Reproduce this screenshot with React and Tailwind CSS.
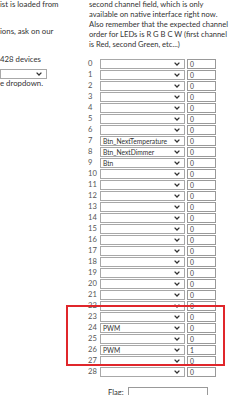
import React from 'react';

const rows = [
  '', '', '', '', '', '', '', 'Btn_NextTemperature', 'Btn_NextDimmer', 'Btn',
  '', '', '', '', '', '', '', '', '', '', '', '', '', '', 'PWM', '', 'PWM', '', '',
];
const values = rows.map((_, i) => (i === 26 ? '1' : '0'));

const Chevron = () => (
  <svg width="6" height="4" viewBox="0 0 6 4" className="shrink-0">
    <polyline points="0.6,0.6 3,3 5.4,0.6" fill="none" stroke="#333" strokeWidth="1.3" />
  </svg>
);

const FakeSelect = ({ value, width }) => (
  <div className={`${width} h-[10px] border border-[#a8a8a8] bg-white flex items-center justify-between pl-[2px] pr-[4px]`}>
    <span className="text-[6.7px] leading-none text-[#333] whitespace-nowrap">{value}</span>
    <Chevron />
  </div>
);

export default function App() {
  return (
    <div
      className="relative w-[250px] h-[395px] overflow-hidden bg-white flex text-[#333]"
      style={{ fontFamily: 'Lato, "Noto Sans", sans-serif' }}
    >
      {/* left column, cut off at the window edge */}
      <div className="w-[88px] shrink-0 overflow-hidden text-[7.8px] leading-[10px] whitespace-nowrap">
        <p className="-mt-[1px]">ist is loaded from</p>
        <p className="mt-[17px]">ions, ask on our</p>
        <p className="mt-[18px]">428 devices</p>
        <div className="mt-[5px] flex">
          <FakeSelect value="" width="w-[47px]" />
        </div>
        <p className="mt-[-1px]">e dropdown.</p>
      </div>

      {/* right column */}
      <div className="flex-1 flex flex-col">
        <div className="pl-[1px] -mt-[1px] text-[7.6px] leading-[10px] whitespace-nowrap">
          <p>second channel field, which is only</p>
          <p>available on native interface right now.</p>
          <p>Also remember that the expected channel</p>
          <p>order for LEDs is R G B C W (first channel</p>
          <p>is Red, second Green, etc...)</p>
        </div>

        <div className="mt-[10px] flex flex-col gap-[1px]">
          {rows.map((r, i) => (
            <div key={i} className="flex items-center h-[10px]">
              <span className="w-[12px] text-[7.6px] leading-none text-[#555]">{i}</span>
              <FakeSelect value={r} width="w-[85px]" />
              <div className="ml-[2px] w-[29px] h-[10px] border border-[#999] bg-white flex items-center pl-[2px]">
                <span className="text-[6.8px] leading-none text-[#444]">{values[i]}</span>
              </div>
            </div>
          ))}
        </div>

        <div className="mt-[10px] flex items-start pl-[20px]">
          <span className="w-[20px] text-[7.6px] leading-[9px] pt-[1px]">Flag:</span>
          <div className="w-[80px] h-[12px] border border-[#999] bg-white" />
        </div>
      </div>

      {/* highlight annotation */}
      <div className="absolute left-[66px] top-[305px] w-[159px] h-[61px] border-2 border-[#e0262b]" />
    </div>
  );
}
